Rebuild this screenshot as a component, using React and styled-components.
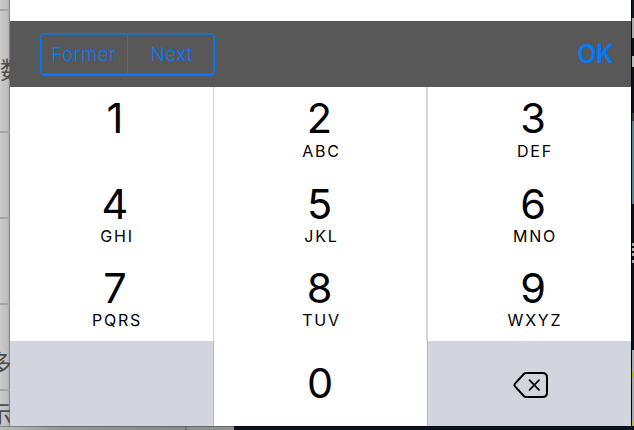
import React from 'react';
import styled, { createGlobalStyle } from 'styled-components';

const Global = createGlobalStyle`
  * { box-sizing: border-box; }
  body { margin: 0; overflow: hidden; font-family: Inter, "Liberation Sans", sans-serif; }
`;

const Desktop = styled.div`
  display: grid;
  grid-template-columns: 10px 621px 3px;
  grid-template-rows: 426px 4px;
  width: 634px;
  height: 430px;
  overflow: hidden;
  background: #0b121c;
`;

const PageEdge = styled.div`
  position: relative;
  overflow: hidden;
  background: linear-gradient(90deg, #cbcbcb 0, #bfbfbf 70%, #b0b0b0 90%, #858585 90%);
`;

const Rule = styled.div`
  position: absolute;
  left: 0;
  top: ${(p) => p.$top}px;
  width: 10px;
  height: 2px;
  background: #a6a6a6;
`;

const EdgeText = styled.span`
  position: absolute;
  left: ${(p) => p.$left}px;
  top: ${(p) => p.$top}px;
  font: 400 24px/28px "Noto Sans CJK SC", sans-serif;
  color: #4d4d50;
  white-space: nowrap;
`;

const Phone = styled.main`
  display: flex;
  flex-direction: column;
  background: #fff;
`;

const Blank = styled.div`
  height: 21px;
`;

const Toolbar = styled.header`
  display: flex;
  align-items: center;
  justify-content: space-between;
  height: 66px;
  padding: 0 17.5px 0 30px;
  background: #585858;
`;

const Segments = styled.div`
  display: grid;
  grid-template-columns: 86px 87px;
  width: 175px;
  height: 43px;
  border: 1px solid #007aff;
  border-bottom-width: 2px;
  border-radius: 5px;
  box-shadow: inset 0 0 0 0.4px #007aff;
`;

const Segment = styled.button`
  padding: 1px 0 0 ${(p) => (p.$divided ? 2 : 0)}px;
  border: 0;
  border-left: ${(p) => (p.$divided ? '1px solid #007aff' : '0')};
  background: none;
  color: #007aff;
  font: 360 18.5px/39px Inter, sans-serif;
  letter-spacing: 0.6px;
`;

const Confirm = styled.button`
  padding: 1px 0 0;
  border: 0;
  background: none;
  color: #007aff;
  font: 600 25px/35px Inter, sans-serif;
  letter-spacing: -0.4px;
`;

const Keypad = styled.section`
  display: grid;
  grid-template-columns: 204px 214px 203px;
  grid-template-rows: 85px 84px 85px 85px;
`;

const Key = styled.button`
  display: flex;
  flex-direction: column;
  align-items: center;
  padding: ${(p) => p.$top}px 0 0 ${(p) => (p.$center ? 0 : 8)}px;
  border: 0;
  border-right: ${(p) => (p.$line ? `${p.$line}px solid ${p.$dark ? '#b4b6b9' : '#d6d6d6'}` : '0')};
  background: ${(p) => (p.$muted ? '#d2d5dd' : '#fff')};
  color: #000;
`;

const Digit = styled.span`
  margin-right: 1px;
  font: 380 41.5px/${(p) => p.$height}px Inter, sans-serif;
`;

const Letters = styled.span`
  margin-right: -3px;
  font: 400 16px/24px Inter, sans-serif;
  letter-spacing: 1.8px;
`;

const DeleteIcon = styled.svg`
  margin: 9.5px 6.5px 0 0;
  width: 35px;
  height: 28px;
`;

const Scenery = styled.div`
  background: linear-gradient(#111924 18px, #aaa 18px 38px, #0b121c 38px 56px, #bbb 56px 67px, #0b121c 67px 113px,
    #333a44 113px 121px, #4f8795 121px 204px, #0b121c 204px 243px, #adb0b3 243px 246px, #0b121c 246px 248px,
    #adb0b3 248px 251px, #0b121c 251px 253px, #adb0b3 253px 256px, #0b121c 256px 260px, #adb0b3 260px 263px,
    #0b121c 263px 350px, #aaa 350px 372px, #b7b320 372px 378px, #aaa 378px 421px, #c0bc18 421px);
  border-left: 1px solid #000;
`;

const BottomEdge = styled.div`
  grid-column: 1 / -1;
  background: linear-gradient(90deg, #bdbdbd 0, #969696 60px, #8b8b8b 185px, #777 185px 187px, #919191 187px 234px, #0b121c 234px);
  box-shadow: inset 0 1px 0 rgba(0, 0, 0, 0.28);
`;

const keys = [
  ['1', ''], ['2', 'ABC'], ['3', 'DEF'],
  ['4', 'GHI'], ['5', 'JKL'], ['6', 'MNO'],
  ['7', 'PQRS'], ['8', 'TUV'], ['9', 'WXYZ'],
];

const lines = [1, 2, 0];

export default function App() {
  return (
    <>
      <Global />
      <Desktop>
        <PageEdge>
          {[9, 131, 217, 303, 389].map((top) => <Rule key={top} $top={top} />)}
          <EdgeText $left={0} $top={55}>数</EdgeText>
          <EdgeText $left={-12} $top={348}>多</EdgeText>
          <EdgeText $left={-12} $top={399}>示</EdgeText>
        </PageEdge>
        <Phone>
          <Blank />
          <Toolbar>
            <Segments>
              <Segment>Former</Segment>
              <Segment $divided>Next</Segment>
            </Segments>
            <Confirm>OK</Confirm>
          </Toolbar>
          <Keypad>
            {keys.map(([digit, letters], i) => (
              <Key key={digit} $center={i % 3 === 1} $line={lines[i % 3]} $top={i < 3 ? 10 : 12}>
                <Digit $height={i < 3 ? 42 : 40}>{digit}</Digit>
                {letters && <Letters>{letters}</Letters>}
              </Key>
            ))}
            <Key $muted $dark $line={1} />
            <Key $center $dark $line={1} $top={21}>
              <Digit $height={42}>0</Digit>
            </Key>
            <Key $muted $top={20} aria-label="Delete">
              <DeleteIcon viewBox="0 0 35 28" fill="none" stroke="#000" strokeLinecap="round" strokeLinejoin="round">
                <path d="M13 2H29.5Q34 2 34 6.5V21.5Q34 26 29.5 26H13Q11.8 26 10.8 25L2 15.3Q.9 14 2 12.7L10.8 3Q11.8 2 13 2Z" strokeWidth="2" />
                <path d="M16.5 9.2L26 18.8M26 9.2L16.5 18.8" strokeWidth="1.7" />
              </DeleteIcon>
            </Key>
          </Keypad>
        </Phone>
        <Scenery />
        <BottomEdge />
      </Desktop>
    </>
  );
}
